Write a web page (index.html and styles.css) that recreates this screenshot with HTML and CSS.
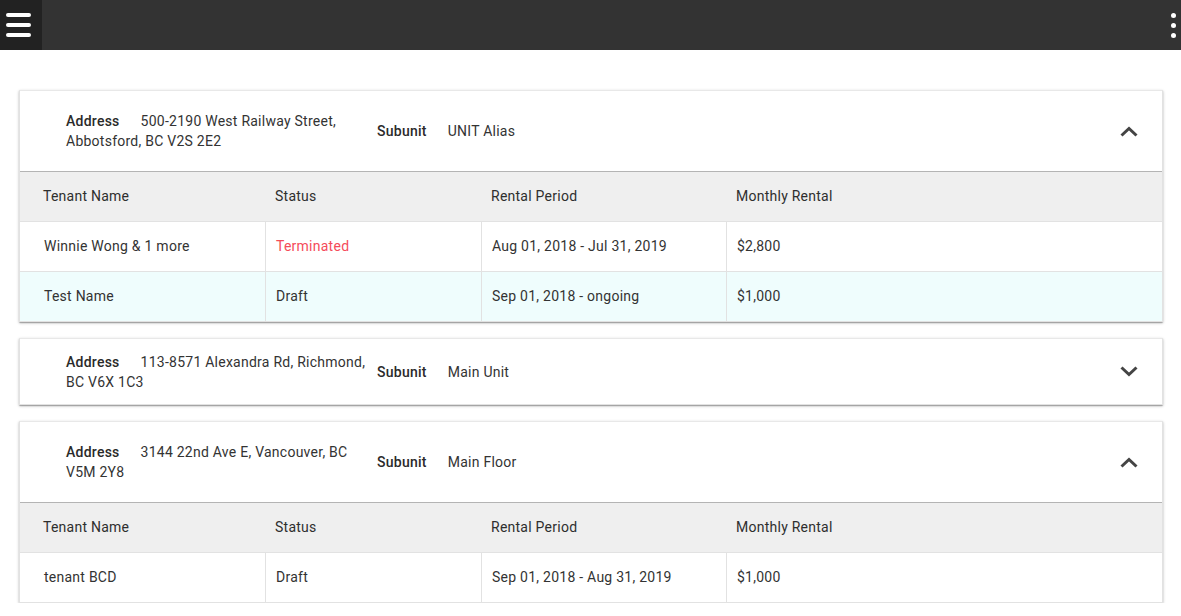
FILE: index.html
```html
<!DOCTYPE html>
<html lang="en">
<head>
<meta charset="utf-8">
<title>Tenancies</title>
<link rel="stylesheet" href="styles.css">
</head>
<body>
<header class="topbar">
  <div class="menu-btn">
    <span class="bar"></span><span class="bar"></span><span class="bar"></span>
  </div>
  <div class="kebab">
    <span class="dot"></span><span class="dot"></span><span class="dot"></span>
  </div>
</header>
<main class="list">
  <section class="card">
    <div class="card-head expanded">
      <div class="addr"><span class="lbl">Address</span>500-2190 West Railway Street, Abbotsford, BC V2S 2E2</div>
      <div class="sub"><span class="lbl">Subunit</span>UNIT Alias</div>
      <svg class="chev" width="18" height="11" viewBox="0 0 18 11"><polyline points="1.5,9.5 9,2.5 16.5,9.5" fill="none" stroke="#444" stroke-width="3"/></svg>
    </div>
    <div class="tbl">
      <div class="row thead"><div class="cell">Tenant Name</div><div class="cell">Status</div><div class="cell">Rental Period</div><div class="cell">Monthly Rental</div></div>
      <div class="row"><div class="cell">Winnie Wong &amp; 1 more</div><div class="cell terminated">Terminated</div><div class="cell">Aug 01, 2018 - Jul 31, 2019</div><div class="cell">$2,800</div></div>
      <div class="row hl"><div class="cell">Test Name</div><div class="cell">Draft</div><div class="cell">Sep 01, 2018 - ongoing</div><div class="cell">$1,000</div></div>
    </div>
  </section>
  <section class="card">
    <div class="card-head">
      <div class="addr"><span class="lbl">Address</span>113-8571 Alexandra Rd, Richmond, BC V6X 1C3</div>
      <div class="sub"><span class="lbl">Subunit</span>Main Unit</div>
      <svg class="chev" width="18" height="11" viewBox="0 0 18 11"><polyline points="1.5,1.5 9,8.5 16.5,1.5" fill="none" stroke="#444" stroke-width="3"/></svg>
    </div>
  </section>
  <section class="card">
    <div class="card-head expanded">
      <div class="addr"><span class="lbl">Address</span>3144 22nd Ave E, Vancouver, BC V5M 2Y8</div>
      <div class="sub"><span class="lbl">Subunit</span>Main Floor</div>
      <svg class="chev" width="18" height="11" viewBox="0 0 18 11"><polyline points="1.5,9.5 9,2.5 16.5,9.5" fill="none" stroke="#444" stroke-width="3"/></svg>
    </div>
    <div class="tbl">
      <div class="row thead"><div class="cell">Tenant Name</div><div class="cell">Status</div><div class="cell">Rental Period</div><div class="cell">Monthly Rental</div></div>
      <div class="row"><div class="cell">tenant BCD</div><div class="cell">Draft</div><div class="cell">Sep 01, 2018 - Aug 31, 2019</div><div class="cell">$1,000</div></div>
    </div>
  </section>
</main>
</body>
</html>
```
FILE: styles.css
```css
* { box-sizing: border-box; }
html, body { margin: 0; padding: 0; background: #fff; }
body {
  font-family: Roboto, "Liberation Sans", Arial, sans-serif;
  font-size: 14px;
  line-height: 20px;
  letter-spacing: 0.25px;
  color: #333;
}
.topbar {
  height: 50px;
  background: #333;
  display: flex;
  align-items: stretch;
  justify-content: space-between;
}
.menu-btn {
  width: 42px;
  background: #222;
  display: flex;
  flex-direction: column;
  justify-content: center;
  gap: 6px;
  padding-left: 6px;
}
.bar {
  display: block;
  width: 25px;
  height: 4px;
  border-radius: 2px;
  background: #fff;
}
.kebab {
  display: flex;
  flex-direction: column;
  justify-content: center;
  gap: 5px;
  padding-right: 5px;
}
.dot {
  display: block;
  width: 5px;
  height: 5px;
  border-radius: 50%;
  background: #fff;
}
.list {
  padding: 40px 18px 0 19px;
  display: flex;
  flex-direction: column;
  gap: 16px;
}
.card {
  background: #fff;
  box-shadow: 0 1px 3px rgba(0,0,0,0.22), 0 1px 1px rgba(0,0,0,0.14), 0 2px 1px -1px rgba(0,0,0,0.12);
  border: 1px solid #e2e2e2;
  border-top-color: #e8e8e8;
}
.card-head {
  height: 65px;
  display: flex;
  align-items: center;
  padding-left: 46px;
  padding-right: 24px;
}
.card-head.expanded { height: 80px; }
.addr { width: 304px; flex-shrink: 0; margin-right: 7px; }
.lbl { font-weight: 500; margin-right: 21px; color: #2a2a2a; }
.chev { margin-left: auto; flex-shrink: 0; }
.row {
  display: grid;
  grid-template-columns: 245px 216px 245px 1fr;
  height: 50px;
  border-top: 1px solid #e2e2e2;
}
.row.thead {
  background: #efefef;
  border-top: 1px solid #b4b4b4;
  color: #2e2e2e;
}
.row.hl { background: #effdfd; }
.cell {
  display: flex;
  align-items: center;
  padding-left: 10px;
  padding-bottom: 2px;
}
.cell:first-child { padding-left: 24px; }
.row.thead .cell:first-child { padding-left: 23px; }
.row:not(.thead) .cell + .cell { border-left: 1px solid #e2e2e2; }
.terminated { color: #f54b5a; }
```
